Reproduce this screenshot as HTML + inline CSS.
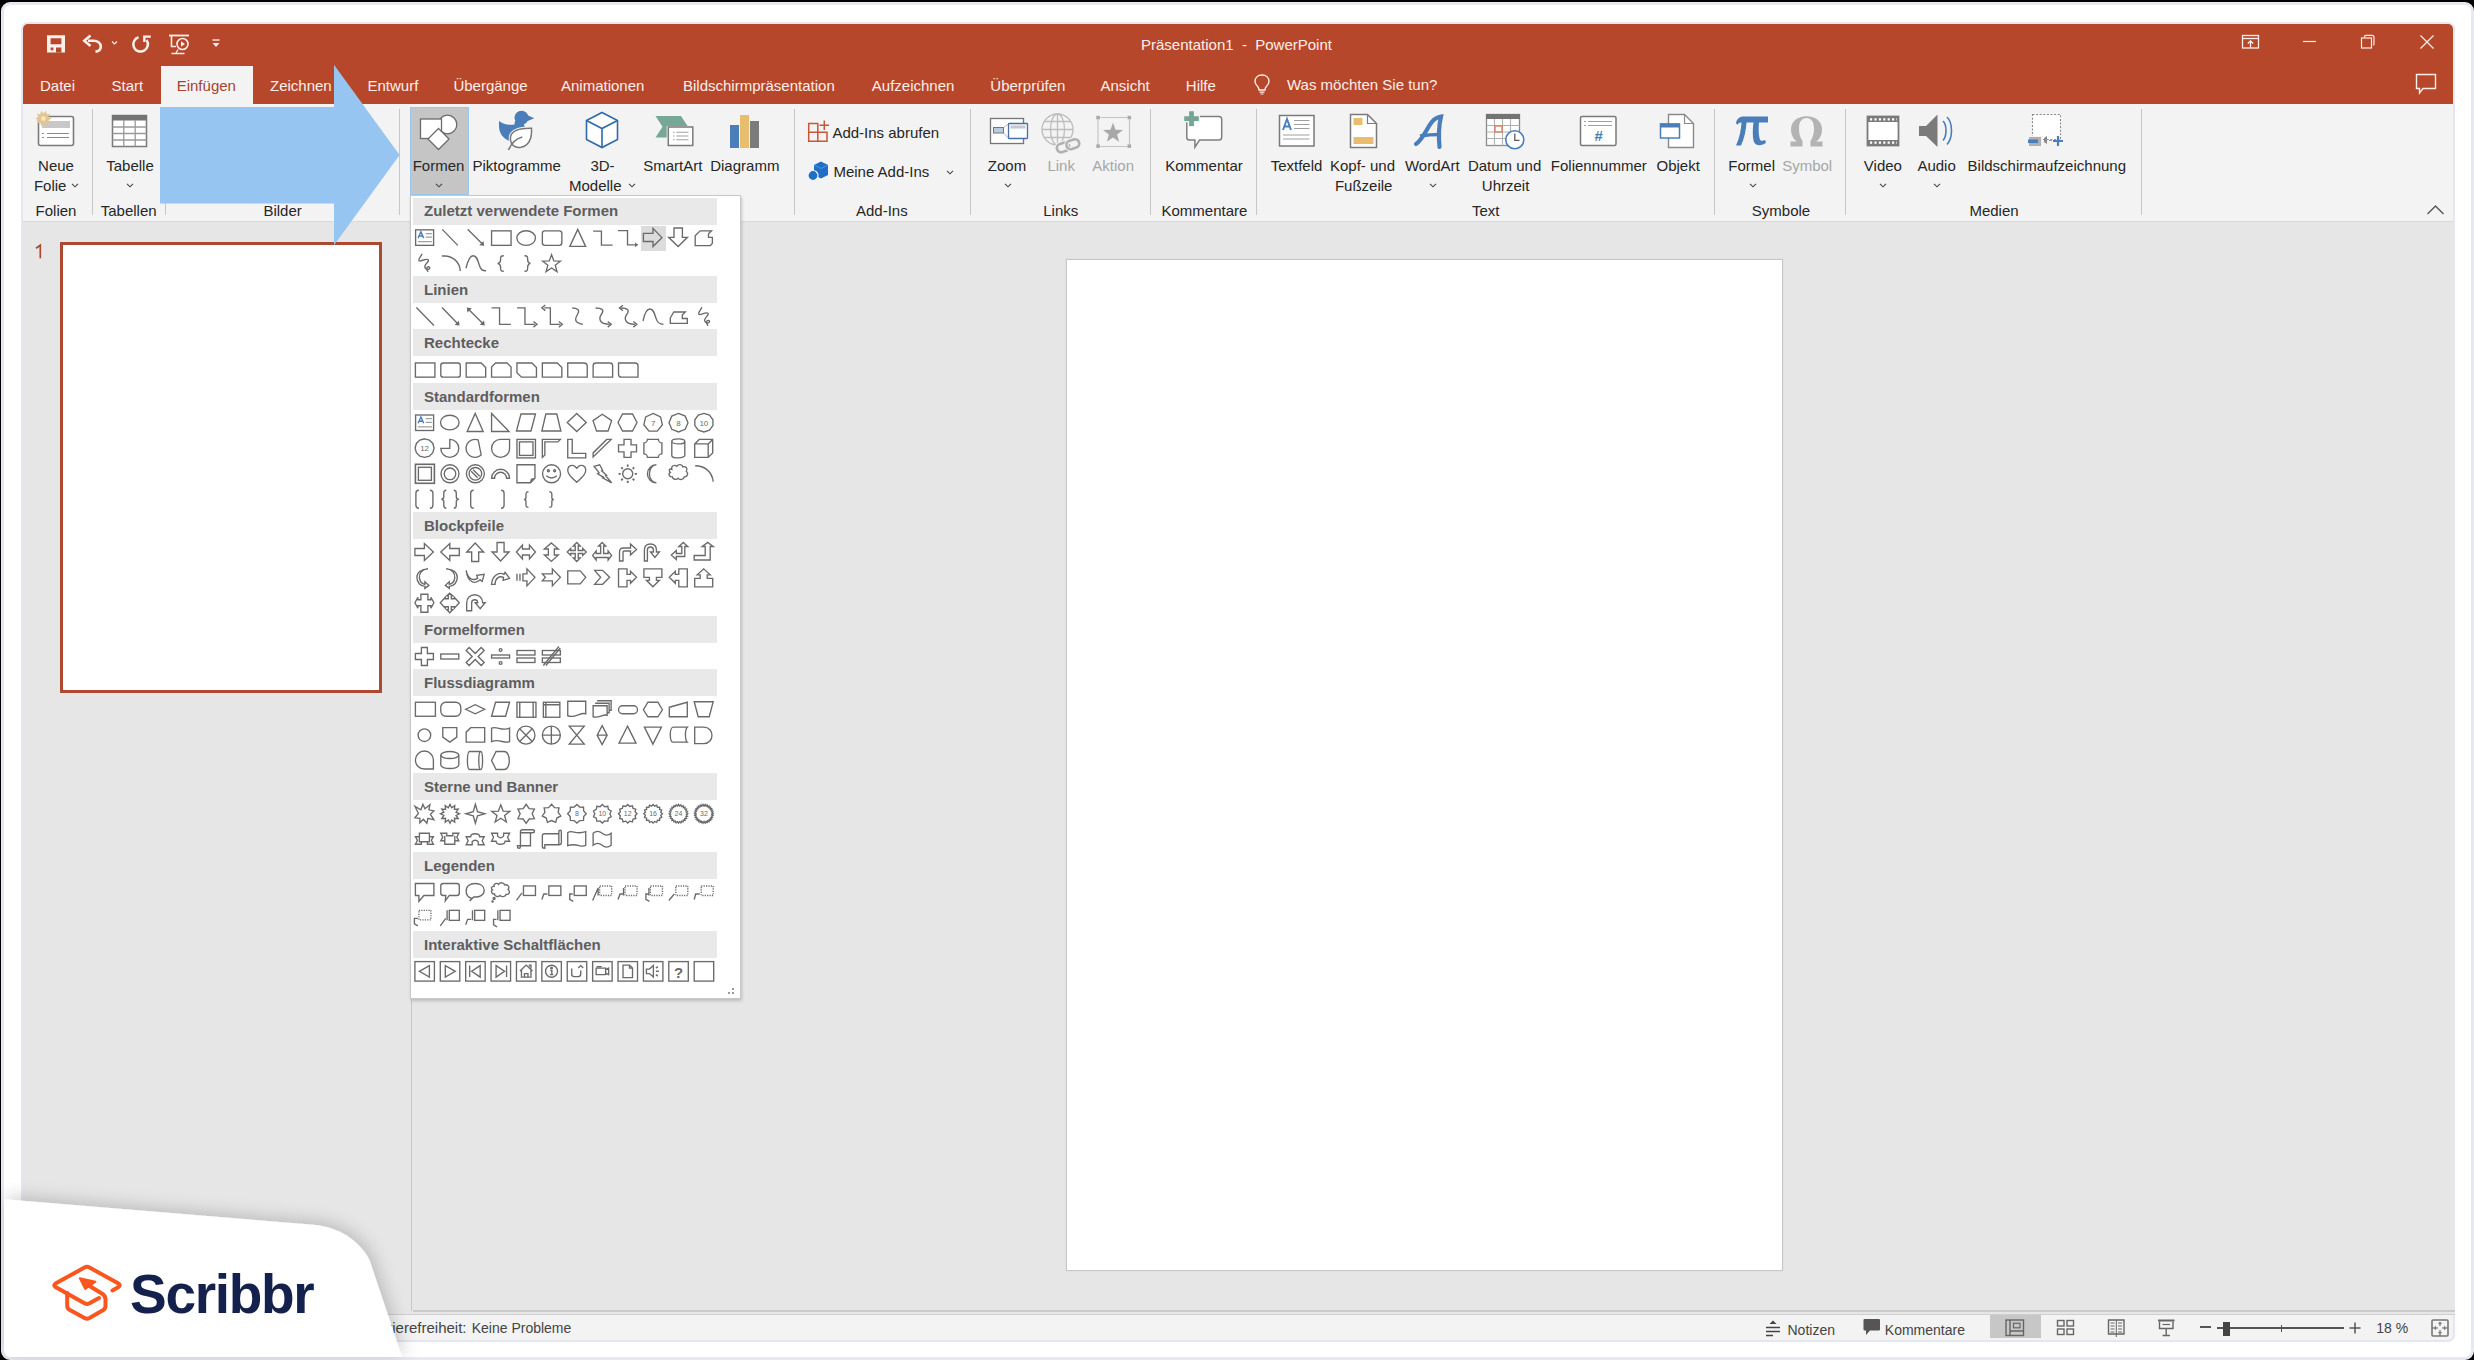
<!DOCTYPE html>
<html><head><meta charset="utf-8">
<style>
*{box-sizing:border-box;margin:0;padding:0}
html,body{width:2474px;height:1360px;overflow:hidden;background:#000}
body{position:relative;font-family:"Liberation Sans",sans-serif;color:#262626}
.a{position:absolute}
.t{position:absolute;white-space:nowrap}
#frame{position:absolute;left:1px;top:2px;width:2473px;height:1358px;background:#fff;border:3px solid #e7e8f1;border-radius:9px}
#win{position:absolute;left:21px;top:22px;width:2434px;height:1320px;border:2px solid #e4e6f2;border-radius:7px;background:#e6e6e6;overflow:hidden}
svg{position:absolute;overflow:visible}
</style></head>
<body>
<div id="frame"></div>
<div id="win">
<div class="a" style="left:0;top:0;width:2430px;height:80px;background:#b7472a"></div>
<div class="a" style="left:0;top:80px;width:2430px;height:117px;background:#f3f3f3"></div>
<div class="a" style="left:0;top:197px;width:2430px;height:1px;background:#d9d9d9"></div>
<div class="a" style="left:0;top:1291px;width:2430px;height:25px;background:#f3f3f3"></div>
</div>

<svg style="left:0px;top:0px" width="300" height="60" viewBox="0 0 300 60"><path fill-rule="evenodd" d="M47 35.3 H65 V52.6 H47 Z M50.6 38.2 H61.4 V44.3 H50.6 Z M50.6 47.6 H53.4 V50.2 H50.6 Z M56 47.6 H61.4 V52.7 H56 Z" fill="#fbefea"/></svg>
<svg style="left:0px;top:0px" width="300" height="60" viewBox="0 0 300 60"><path d="M88 40.8 H93.5 C98 40.8 100.8 43.5 100.8 46.5 C100.8 49.5 98.5 51.3 95.5 51.6" fill="none" stroke="#fbefea" stroke-width="2.6"/><path d="M90.5 35.5 L84.3 40.8 L90.5 46" fill="none" stroke="#fbefea" stroke-width="2.6" stroke-linejoin="miter"/></svg>
<svg style="left:110.5px;top:39.5px" width="7.0" height="5.0" viewBox="0 0 7.0 5.0"><path d="M1 1.5 L3.5 4.0 L6.0 1.5" fill="none" stroke="#fbefea" stroke-width="1.1"/></svg>
<svg style="left:0px;top:0px" width="300" height="60" viewBox="0 0 300 60"><path d="M138.5 37.3 A7.3 7.3 0 1 0 146.5 40" fill="none" stroke="#fbefea" stroke-width="2.5"/><path d="M144.3 42 V36.6 H150.8" fill="none" stroke="#fbefea" stroke-width="2.4"/></svg>
<svg style="left:168px;top:34px" width="24" height="22" viewBox="0 0 24 22"><path d="M1 1.5 H21" stroke="#fbefea" stroke-width="1.8"/><path d="M3.5 2 V12.5 H8" fill="none" stroke="#fbefea" stroke-width="1.6"/><circle cx="14.5" cy="10" r="5.5" fill="none" stroke="#fbefea" stroke-width="1.6"/><path d="M13 7.2 L17 10 L13 12.8 Z" fill="#fbefea"/><path d="M3.5 19.5 H16.5" stroke="#fbefea" stroke-width="1.5"/><path d="M10 15.5 L8 19" stroke="#fbefea" stroke-width="1.3"/></svg>
<svg style="left:211px;top:38px" width="10" height="12" viewBox="0 0 10 12"><path d="M1.5 2 H8.5" stroke="#fbefea" stroke-width="1.4"/><path d="M1.5 5 H8.5 L5 9 Z" fill="#fbefea"/></svg>
<div class="t" style="left:1236.5px;top:37.3px;font-size:15px;line-height:15px;color:#fbefea;font-weight:normal;transform:translateX(-50%);">Präsentation1&nbsp; -&nbsp; PowerPoint</div>
<svg style="left:2241px;top:34px" width="20" height="16" viewBox="0 0 20 16"><rect x="1.5" y="1.5" width="16" height="12.5" fill="none" stroke="#fbefea" stroke-width="1.3"/><path d="M1.5 4.5 H17.5" stroke="#fbefea" stroke-width="1.3"/><path d="M9.5 13.5 V7 M6.8 9.5 L9.5 6.8 L12.2 9.5" fill="none" stroke="#fbefea" stroke-width="1.3"/></svg>
<svg style="left:2302px;top:40px" width="15" height="3" viewBox="0 0 15 3"><path d="M1 1.5 H14" stroke="#fbefea" stroke-width="1.2"/></svg>
<svg style="left:2360px;top:34px" width="16" height="16" viewBox="0 0 16 16"><rect x="1.5" y="4" width="10" height="10" fill="none" stroke="#fbefea" stroke-width="1.2"/><path d="M4.5 3.5 V2.5 Q4.5 1.3 6 1.3 H12 Q14 1.3 14 3.3 V10 Q14 11 13 11" fill="none" stroke="#fbefea" stroke-width="1.2"/></svg>
<svg style="left:2419px;top:34px" width="16" height="16" viewBox="0 0 16 16"><path d="M1.5 1.5 L14.5 14.5 M14.5 1.5 L1.5 14.5" stroke="#fbefea" stroke-width="1.3"/></svg>
<svg style="left:2415px;top:73px" width="24" height="23" viewBox="0 0 24 23"><path d="M1.5 1.5 H20.5 V15.5 H8 L4.5 20 V15.5 H1.5 Z" fill="none" stroke="#fbefea" stroke-width="1.4"/></svg>
<div class="a" style="left:161px;top:66px;width:92px;height:38px;background:#f3f3f3"></div>
<div class="t" style="left:40.0px;top:77.8px;font-size:15px;line-height:15px;color:#fbefea;font-weight:normal;">Datei</div>
<div class="t" style="left:111.5px;top:77.8px;font-size:15px;line-height:15px;color:#fbefea;font-weight:normal;">Start</div>
<div class="t" style="left:270.0px;top:77.8px;font-size:15px;line-height:15px;color:#fbefea;font-weight:normal;">Zeichnen</div>
<div class="t" style="left:367.5px;top:77.8px;font-size:15px;line-height:15px;color:#fbefea;font-weight:normal;">Entwurf</div>
<div class="t" style="left:453.4px;top:77.8px;font-size:15px;line-height:15px;color:#fbefea;font-weight:normal;">Übergänge</div>
<div class="t" style="left:561.0px;top:77.8px;font-size:15px;line-height:15px;color:#fbefea;font-weight:normal;">Animationen</div>
<div class="t" style="left:683.0px;top:77.8px;font-size:15px;line-height:15px;color:#fbefea;font-weight:normal;">Bildschirmpräsentation</div>
<div class="t" style="left:871.8px;top:77.8px;font-size:15px;line-height:15px;color:#fbefea;font-weight:normal;">Aufzeichnen</div>
<div class="t" style="left:990.3px;top:77.8px;font-size:15px;line-height:15px;color:#fbefea;font-weight:normal;">Überprüfen</div>
<div class="t" style="left:1100.5px;top:77.8px;font-size:15px;line-height:15px;color:#fbefea;font-weight:normal;">Ansicht</div>
<div class="t" style="left:1185.8px;top:77.8px;font-size:15px;line-height:15px;color:#fbefea;font-weight:normal;">Hilfe</div>
<div class="t" style="left:176.7px;top:77.8px;font-size:15px;line-height:15px;color:#a5432b;font-weight:normal;">Einfügen</div>
<svg style="left:1253px;top:73px" width="18" height="22" viewBox="0 0 18 22"><path d="M9 2 C4.5 2 2 5 2 8.5 C2 11 3.5 12.5 5 14 C5.8 15 6 16 6 17 H12 C12 16 12.2 15 13 14 C14.5 12.5 16 11 16 8.5 C16 5 13.5 2 9 2 Z" fill="none" stroke="#fbefea" stroke-width="1.4"/><path d="M6.5 19.2 H11.5 M7.5 21 H10.5" stroke="#fbefea" stroke-width="1.2"/></svg>
<div class="t" style="left:1287.0px;top:76.5px;font-size:15px;line-height:15px;color:#fbefea;font-weight:normal;">Was möchten Sie tun?</div>
<div class="a" style="left:92px;top:109px;width:1px;height:106px;background:#c6c6c6"></div>
<div class="a" style="left:165px;top:109px;width:1px;height:106px;background:#c6c6c6"></div>
<div class="a" style="left:399px;top:109px;width:1px;height:106px;background:#c6c6c6"></div>
<div class="a" style="left:794px;top:109px;width:1px;height:106px;background:#c6c6c6"></div>
<div class="a" style="left:970px;top:109px;width:1px;height:106px;background:#c6c6c6"></div>
<div class="a" style="left:1150px;top:109px;width:1px;height:106px;background:#c6c6c6"></div>
<div class="a" style="left:1256px;top:109px;width:1px;height:106px;background:#c6c6c6"></div>
<div class="a" style="left:1714px;top:109px;width:1px;height:106px;background:#c6c6c6"></div>
<div class="a" style="left:1845px;top:109px;width:1px;height:106px;background:#c6c6c6"></div>
<div class="a" style="left:2141px;top:109px;width:1px;height:106px;background:#c6c6c6"></div>
<svg style="left:34px;top:110px" width="42" height="38" viewBox="0 0 42 38"><rect x="4.5" y="6.5" width="35" height="29" rx="2" fill="#fff" stroke="#7a7a7a" stroke-width="1.6"/>
<rect x="8" y="11" width="28" height="7" fill="#c8c8c8"/>
<path d="M8 23.5 H10 M13 23.5 H35 M8 27.5 H10 M13 27.5 H35" stroke="#8a8a8a" stroke-width="1.2"/>
<g transform="translate(9.5,8.5)" fill="#e3c690"><circle r="5.2"/><path d="M8.20 0.00 L4.20 2.00 L4.20 -2.00 Z M6.63 4.82 L2.22 4.09 L4.57 0.85 Z M2.53 7.80 L-0.60 4.61 L3.20 3.38 Z M-2.53 7.80 L-3.20 3.38 L0.60 4.61 Z M-6.63 4.82 L-4.57 0.85 L-2.22 4.09 Z M-8.20 0.00 L-4.20 -2.00 L-4.20 2.00 Z M-6.63 -4.82 L-2.22 -4.09 L-4.57 -0.85 Z M-2.53 -7.80 L0.60 -4.61 L-3.20 -3.38 Z M2.53 -7.80 L3.20 -3.38 L-0.60 -4.61 Z M6.63 -4.82 L4.57 -0.85 L2.22 -4.09 Z"/></g>
<circle cx="9.5" cy="8.5" r="2.2" fill="#f5e8cf"/></svg>
<div class="t" style="left:56.0px;top:158.0px;font-size:15px;line-height:15px;color:#262626;font-weight:normal;transform:translateX(-50%);">Neue</div>
<div class="t" style="left:33.9px;top:178.1px;font-size:15px;line-height:15px;color:#262626;font-weight:normal;">Folie</div>
<svg style="left:70.5px;top:182px" width="8" height="6" viewBox="0 0 8 6"><path d="M1 1.8 L4 4.8 L7 1.8" fill="none" stroke="#444" stroke-width="1.1"/></svg>
<div class="t" style="left:56.0px;top:202.5px;font-size:15px;line-height:15px;color:#262626;font-weight:normal;transform:translateX(-50%);">Folien</div>
<svg style="left:111px;top:114px" width="37" height="34" viewBox="0 0 37 34"><rect x="1.5" y="1.5" width="34" height="31" fill="#fff" stroke="#7a7a7a" stroke-width="1.5"/>
<rect x="1" y="1" width="35" height="5.5" fill="#737373"/>
<path d="M1.5 13 H35.5 M1.5 19.5 H35.5 M1.5 26 H35.5 M12.8 6 V32.5 M24.2 6 V32.5" stroke="#9a9a9a" stroke-width="1.3"/></svg>
<div class="t" style="left:130.0px;top:158.0px;font-size:15px;line-height:15px;color:#262626;font-weight:normal;transform:translateX(-50%);">Tabelle</div>
<svg style="left:125.69999999999999px;top:182px" width="8" height="6" viewBox="0 0 8 6"><path d="M1 1.8 L4 4.8 L7 1.8" fill="none" stroke="#444" stroke-width="1.1"/></svg>
<div class="t" style="left:128.7px;top:202.5px;font-size:15px;line-height:15px;color:#262626;font-weight:normal;transform:translateX(-50%);">Tabellen</div>
<div class="t" style="left:282.6px;top:202.5px;font-size:15px;line-height:15px;color:#262626;font-weight:normal;transform:translateX(-50%);">Bilder</div>
<div class="a" style="left:410px;top:107px;width:59px;height:88px;background:#c5c5c5;border:1px solid #98c8f0"></div>
<svg style="left:418px;top:112px" width="42" height="42" viewBox="0 0 42 42"><circle cx="29.5" cy="12.5" r="9.3" fill="#fff" stroke="#6b6b6b" stroke-width="1.3"/>
<rect x="2.5" y="7" width="21" height="19.5" fill="#fff" stroke="#6b6b6b" stroke-width="1.3"/>
<path d="M20.5 16.5 L31 27 L20.5 37.5 L10 27 Z" fill="#fff" stroke="#6b6b6b" stroke-width="1.3"/></svg>
<div class="t" style="left:438.5px;top:158.0px;font-size:15px;line-height:15px;color:#262626;font-weight:normal;transform:translateX(-50%);">Formen</div>
<svg style="left:435.4px;top:182.3px" width="8" height="6" viewBox="0 0 8 6"><path d="M1 1.8 L4 4.8 L7 1.8" fill="none" stroke="#444" stroke-width="1.1"/></svg>
<svg style="left:490px;top:105px" width="50" height="50" viewBox="0 0 50 50"><path d="M9 16 C13 19 18 20.5 24.5 19.5 L25 16 L33 16 L34.5 21.5 L35 24 L23 37 C13 35 9 28 9 21 Z" fill="#4a7ebb"/>
<circle cx="31.5" cy="12.8" r="7" fill="#4a7ebb"/><path d="M37 10 L44.3 13.2 L36.5 16.5 Z" fill="#4a7ebb"/>
<path d="M20.5 31.5 C22 25.5 30 23 41.5 23.2 C42 31 40 40 31 42.3 C25 43.5 21 40 20.5 35 Z" fill="#fff" stroke="#f3f3f3" stroke-width="3.5"/>
<path d="M20.5 31.5 C22 25.5 30 23 41.5 23.2 C42 31 40 40 31 42.3 C25 43.5 21 40 20.5 35 Z" fill="#fff" stroke="#787878" stroke-width="1.5"/>
<path d="M18.5 45 C22 37 26 33.5 32.3 32" fill="none" stroke="#787878" stroke-width="1.6"/></svg>
<div class="t" style="left:516.7px;top:158.0px;font-size:15px;line-height:15px;color:#262626;font-weight:normal;transform:translateX(-50%);">Piktogramme</div>
<svg style="left:584px;top:110px" width="36" height="40" viewBox="0 0 36 40"><path d="M18 2.5 L33.5 10.5 V29.5 L18 37.5 L2.5 29.5 V10.5 Z" fill="#fff" stroke="#2e6aa8" stroke-width="1.6"/>
<path d="M2.5 10.5 L18 18.5 L33.5 10.5 M18 18.5 V37.5" fill="none" stroke="#2e6aa8" stroke-width="1.6"/></svg>
<div class="t" style="left:602.5px;top:158.0px;font-size:15px;line-height:15px;color:#262626;font-weight:normal;transform:translateX(-50%);">3D-</div>
<div class="t" style="left:569.0px;top:178.1px;font-size:15px;line-height:15px;color:#262626;font-weight:normal;">Modelle</div>
<svg style="left:628.4px;top:182.3px" width="8" height="6" viewBox="0 0 8 6"><path d="M1 1.8 L4 4.8 L7 1.8" fill="none" stroke="#444" stroke-width="1.1"/></svg>
<svg style="left:654px;top:114px" width="40" height="34" viewBox="0 0 40 34"><path d="M1.5 2 H27 L34 12.8 L27 23.6 H1.5 L8.5 12.8 Z" fill="#76a797"/>
<rect x="12.7" y="12" width="28" height="21" fill="#f3f3f3"/>
<rect x="14.3" y="13" width="24.5" height="18.5" fill="#fff" stroke="#7a7a7a" stroke-width="1.5"/>
<path d="M19 18.2 H20.5 M22.5 18.2 H34.5 M19 22 H20.5 M22.5 22 H34.5 M19 25.8 H20.5 M22.5 25.8 H34.5" stroke="#a0a0a0" stroke-width="1.1"/></svg>
<div class="t" style="left:672.8px;top:158.0px;font-size:15px;line-height:15px;color:#262626;font-weight:normal;transform:translateX(-50%);">SmartArt</div>
<div class="a" style="left:730px;top:125px;width:9px;height:23px;background:#4a7ebb"></div>
<div class="a" style="left:740px;top:115px;width:9px;height:33px;background:#e8bd6e"></div>
<div class="a" style="left:750px;top:121px;width:9px;height:27px;background:#7b7b7b"></div>
<div class="t" style="left:744.8px;top:158.0px;font-size:15px;line-height:15px;color:#262626;font-weight:normal;transform:translateX(-50%);">Diagramm</div>
<svg style="left:0px;top:0px" width="1000" height="200" viewBox="0 0 1000 200"><path d="M808.7 123.5 H817.8 V132.2 H808.7 Z M808.7 132.2 H817.8 V141.2 H808.7 Z M817.8 132.2 H827 V141.2 H817.8 Z" fill="none" stroke="#c8563b" stroke-width="1.5"/>
<path d="M824.3 120.5 V130 M819.5 125.2 H829" stroke="#c8563b" stroke-width="1.5"/></svg>
<div class="t" style="left:832.4px;top:125.1px;font-size:15px;line-height:15px;color:#262626;font-weight:normal;">Add-Ins abrufen</div>
<svg style="left:807px;top:160px" width="23" height="22" viewBox="0 0 23 22"><path d="M7 5 L14 1.5 L21 5 V15 L14 18.5 L7 15 Z" fill="#1e6fc5"/><path d="M7 5 L14 8.5 L21 5" fill="none" stroke="#5b9ae0" stroke-width="0.8"/><circle cx="6" cy="15.5" r="5" fill="#1e6fc5" stroke="#f3f3f3" stroke-width="1.2"/></svg>
<div class="t" style="left:833.4px;top:164.3px;font-size:15px;line-height:15px;color:#262626;font-weight:normal;">Meine Add-Ins</div>
<svg style="left:945.5px;top:168.5px" width="8" height="6" viewBox="0 0 8 6"><path d="M1 1.8 L4 4.8 L7 1.8" fill="none" stroke="#444" stroke-width="1.1"/></svg>
<div class="t" style="left:881.8px;top:202.5px;font-size:15px;line-height:15px;color:#262626;font-weight:normal;transform:translateX(-50%);">Add-Ins</div>
<svg style="left:0px;top:0px" width="1200" height="200" viewBox="0 0 1200 200"><rect x="990.5" y="118.5" width="33" height="25" fill="#fff" stroke="#767676" stroke-width="1.3"/>
<path d="M1003.5 127.5 L1008.5 123.8 M1003.5 133 L1008.5 138.2" stroke="#9bb5d3" stroke-width="0.9"/>
<rect x="993.5" y="127.5" width="10" height="5.5" fill="#b9cde2" stroke="#767676" stroke-width="1"/>
<rect x="1008.5" y="123.5" width="19" height="15" rx="0.8" fill="#fafdff" stroke="#4a6fa5" stroke-width="1.3"/>
<rect x="1010.5" y="125.5" width="15" height="3" fill="#c8c8c8"/></svg>
<div class="t" style="left:1007.0px;top:158.0px;font-size:15px;line-height:15px;color:#262626;font-weight:normal;transform:translateX(-50%);">Zoom</div>
<svg style="left:1003.5px;top:182.3px" width="8" height="6" viewBox="0 0 8 6"><path d="M1 1.8 L4 4.8 L7 1.8" fill="none" stroke="#444" stroke-width="1.1"/></svg>
<svg style="left:1040px;top:112px" width="44" height="42" viewBox="0 0 44 42"><circle cx="17.5" cy="17.5" r="15.5" fill="none" stroke="#bdbdbd" stroke-width="1.3"/>
<ellipse cx="17.5" cy="17.5" rx="7" ry="15.5" fill="none" stroke="#bdbdbd" stroke-width="1.3"/>
<path d="M2 17.5 H33 M4.5 9.5 H30.5 M4.5 25.5 H30.5 M17.5 2 V33" stroke="#bdbdbd" stroke-width="1.3"/>
<g transform="rotate(-18 28 33.5)"><rect x="16.5" y="29.5" width="12.5" height="8.5" rx="4.2" fill="none" stroke="#f3f3f3" stroke-width="4.5"/><rect x="16.5" y="29.5" width="12.5" height="8.5" rx="4.2" fill="none" stroke="#b0b0b0" stroke-width="2.6"/>
<rect x="26.5" y="29.5" width="13" height="8.5" rx="4.2" fill="none" stroke="#f3f3f3" stroke-width="4.5"/><rect x="26.5" y="29.5" width="13" height="8.5" rx="4.2" fill="none" stroke="#b0b0b0" stroke-width="2.6"/></g></svg>
<div class="t" style="left:1061.2px;top:158.0px;font-size:15px;line-height:15px;color:#a6a6a6;font-weight:normal;transform:translateX(-50%);">Link</div>
<svg style="left:0px;top:0px" width="1200" height="200" viewBox="0 0 1200 200"><path d="M1100.5 117.5 H1127 M1100.5 146.5 H1127 M1098 120 V144 M1129.5 120 V144" stroke="#c2c2c2" stroke-width="1.1"/>
<rect x="1096.3" y="115.8" width="3.6" height="3.6" fill="#a9a9a9"/><rect x="1127.5" y="115.8" width="3.6" height="3.6" fill="#a9a9a9"/><rect x="1096.3" y="144.3" width="3.6" height="3.6" fill="#a9a9a9"/><rect x="1127.5" y="144.3" width="3.6" height="3.6" fill="#a9a9a9"/>
<path d="M1113.00 122.70 L1115.53 129.72 L1122.99 129.96 L1117.09 134.53 L1119.17 141.69 L1113.00 137.50 L1106.83 141.69 L1108.91 134.53 L1103.01 129.96 L1110.47 129.72 Z" fill="#a8a8a8"/></svg>
<div class="t" style="left:1113.2px;top:158.0px;font-size:15px;line-height:15px;color:#a6a6a6;font-weight:normal;transform:translateX(-50%);">Aktion</div>
<div class="t" style="left:1060.8px;top:202.5px;font-size:15px;line-height:15px;color:#262626;font-weight:normal;transform:translateX(-50%);">Links</div>
<svg style="left:1182px;top:109px" width="44" height="42" viewBox="0 0 44 42"><path d="M7.5 7.6 H37 Q39.7 7.6 39.7 10.5 V28.3 Q39.7 31.1 37 31.1 H17.5 L12.9 38.2 V31.1 H7.5 Q4.8 31.1 4.8 28.3 V10.5 Q4.8 7.6 7.5 7.6 Z" fill="#fff" stroke="#7f7f7f" stroke-width="1.5"/>
<path d="M9.5 1.2 V18 M1.1 9.6 H17.9" stroke="#f3f3f3" stroke-width="7.2"/>
<path d="M9.5 2.3 V16.9 M2.2 9.6 H16.8" stroke="#76a596" stroke-width="4.8"/></svg>
<div class="t" style="left:1204.0px;top:158.0px;font-size:15px;line-height:15px;color:#262626;font-weight:normal;transform:translateX(-50%);">Kommentar</div>
<div class="t" style="left:1204.4px;top:202.5px;font-size:15px;line-height:15px;color:#262626;font-weight:normal;transform:translateX(-50%);">Kommentare</div>
<svg style="left:1278px;top:114px" width="39" height="34" viewBox="0 0 39 34"><rect x="1.5" y="1.5" width="34.5" height="30.5" fill="#fff" stroke="#7a7a7a" stroke-width="1.5"/>
<path d="M5 16 L9 5 L13 16 M6.3 12.5 H11.7" fill="none" stroke="#4a7ebb" stroke-width="1.9"/>
<path d="M16 6.5 H31.5 M16 10.5 H31.5 M16 14.5 H31.5 M5 21 H31.5 M5 25 H31.5" stroke="#a0a0a0" stroke-width="1.2"/></svg>
<div class="t" style="left:1296.5px;top:158.0px;font-size:15px;line-height:15px;color:#262626;font-weight:normal;transform:translateX(-50%);">Textfeld</div>
<svg style="left:1349px;top:113px" width="30" height="37" viewBox="0 0 30 37"><path d="M1.5 1.5 H18.5 L27.5 10.5 V34.5 H1.5 Z" fill="#fff" stroke="#7a7a7a" stroke-width="1.5"/>
<path d="M18.5 1.5 V10.5 H27.5" fill="none" stroke="#7a7a7a" stroke-width="1.2"/>
<rect x="4.5" y="5" width="9" height="7" fill="#e8bd6e"/><rect x="4.5" y="24" width="20" height="7" fill="#e8bd6e"/></svg>
<div class="t" style="left:1362.5px;top:158.0px;font-size:15px;line-height:15px;color:#262626;font-weight:normal;transform:translateX(-50%);">Kopf- und</div>
<div class="t" style="left:1363.7px;top:178.1px;font-size:15px;line-height:15px;color:#262626;font-weight:normal;transform:translateX(-50%);">Fußzeile</div>
<svg style="left:1414px;top:114px" width="32" height="36" viewBox="0 0 32 36"><path d="M2 30 C7 27 11 19 15 12 C18 7 22 3 27 2.5 C25 11 24.5 22 25.5 33" fill="none" stroke="#4a7ebb" stroke-width="4.2" stroke-linecap="round"/>
<path d="M6 22 C12 21 19 20.5 26 20.5" fill="none" stroke="#4a7ebb" stroke-width="3.5"/></svg>
<div class="t" style="left:1432.3px;top:158.0px;font-size:15px;line-height:15px;color:#262626;font-weight:normal;transform:translateX(-50%);">WordArt</div>
<svg style="left:1429px;top:182.3px" width="8" height="6" viewBox="0 0 8 6"><path d="M1 1.8 L4 4.8 L7 1.8" fill="none" stroke="#444" stroke-width="1.1"/></svg>
<svg style="left:1485px;top:113px" width="42" height="38" viewBox="0 0 42 38"><rect x="1.5" y="1.5" width="33" height="31" fill="#fff" stroke="#8a8a8a" stroke-width="1.3"/>
<rect x="1" y="1" width="34" height="5" fill="#737373"/>
<path d="M1.5 12.5 H34.5 M1.5 19 H34.5 M1.5 25.5 H34.5 M9.5 6 V32.5 M17.5 6 V32.5 M25.5 6 V32.5" stroke="#b0b0b0" stroke-width="1.1"/>
<rect x="10" y="13" width="7" height="6" fill="none" stroke="#e07a56" stroke-width="1.3"/>
<circle cx="29.8" cy="26.8" r="9" fill="#fff" stroke="#4a7ebb" stroke-width="1.6"/>
<path d="M29.8 20.5 V27.3 H34.5" fill="none" stroke="#5a5a5a" stroke-width="1.3"/></svg>
<div class="t" style="left:1504.6px;top:158.0px;font-size:15px;line-height:15px;color:#262626;font-weight:normal;transform:translateX(-50%);">Datum und</div>
<div class="t" style="left:1505.6px;top:178.1px;font-size:15px;line-height:15px;color:#262626;font-weight:normal;transform:translateX(-50%);">Uhrzeit</div>
<svg style="left:1579px;top:115px" width="40" height="33" viewBox="0 0 40 33"><rect x="1.5" y="1.5" width="35.5" height="29" rx="1.5" fill="#fff" stroke="#7a7a7a" stroke-width="1.5"/>
<path d="M5 6.5 H7 M9 6.5 H33 M5 10.5 H7 M9 10.5 H33" stroke="#a0a0a0" stroke-width="1.1"/>
<text x="19.3" y="26" font-family="Liberation Sans" font-size="15" font-weight="bold" fill="#4a7ebb" text-anchor="middle" font-style="italic">#</text></svg>
<div class="t" style="left:1598.8px;top:158.0px;font-size:15px;line-height:15px;color:#262626;font-weight:normal;transform:translateX(-50%);">Foliennummer</div>
<svg style="left:1659px;top:113px" width="38" height="37" viewBox="0 0 38 37"><path d="M9.5 1.5 H25.5 L34.5 10.5 V34.5 H9.5 Z" fill="#fff" stroke="#8a8a8a" stroke-width="1.4"/>
<path d="M25.5 1.5 V10.5 H34.5" fill="none" stroke="#8a8a8a" stroke-width="1.2"/>
<rect x="1.5" y="11" width="19" height="14" fill="#fff" stroke="#4a7ebb" stroke-width="1.5"/><rect x="1" y="10.5" width="20" height="4" fill="#4a7ebb"/></svg>
<div class="t" style="left:1678.2px;top:158.0px;font-size:15px;line-height:15px;color:#262626;font-weight:normal;transform:translateX(-50%);">Objekt</div>
<div class="t" style="left:1485.7px;top:202.5px;font-size:15px;line-height:15px;color:#262626;font-weight:normal;transform:translateX(-50%);">Text</div>
<svg style="left:1734px;top:114px" width="36" height="34" viewBox="0 0 36 34"><path d="M2 9 C3 4 6 2.5 10 2.5 H34 V8.5 H25 C24.5 14 24.5 20 25.5 24 C26 27 28 27.5 31 26 L32 28.5 C28.5 32 22 32.5 20 28 C18.5 24 18.5 15 19.5 8.5 H12.5 C12 16 10.5 24 7 31.5 H2 C5.5 24 7 16 7.5 8.5 C5 8.5 4 9.5 3.5 11 Z" fill="#4a7ebb"/></svg>
<svg style="left:1790px;top:116px" width="33" height="31" viewBox="0 0 33 31"><path fill-rule="evenodd" d="M12.5 30.5 H0.5 V25.5 H7 C3 23 1 18.5 1 13.5 C1 5.5 7.5 0.3 16.5 0.3 C25.5 0.3 32 5.5 32 13.5 C32 18.5 30 23 26 25.5 H32.5 V30.5 H20.5 V25 C22.8 22 24 17.5 24 12.5 C24 5.5 21 2 16.5 2 C12 2 9 5.5 9 12.5 C9 17.5 10.2 22 12.5 25 Z" fill="#b3b3b3"/></svg>
<div class="t" style="left:1751.7px;top:158.0px;font-size:15px;line-height:15px;color:#262626;font-weight:normal;transform:translateX(-50%);">Formel</div>
<svg style="left:1748.5px;top:182.3px" width="8" height="6" viewBox="0 0 8 6"><path d="M1 1.8 L4 4.8 L7 1.8" fill="none" stroke="#444" stroke-width="1.1"/></svg>
<div class="t" style="left:1807.2px;top:158.0px;font-size:15px;line-height:15px;color:#a6a6a6;font-weight:normal;transform:translateX(-50%);">Symbol</div>
<div class="t" style="left:1781.0px;top:202.5px;font-size:15px;line-height:15px;color:#262626;font-weight:normal;transform:translateX(-50%);">Symbole</div>
<svg style="left:1866px;top:115px" width="35" height="32" viewBox="0 0 35 32"><rect x="1.5" y="1.5" width="31" height="29" fill="#fff" stroke="#7a7a7a" stroke-width="1.8"/>
<rect x="1.5" y="1.5" width="31" height="5.5" fill="#7a7a7a"/><rect x="1.5" y="25" width="31" height="5.5" fill="#7a7a7a"/>
<path d="M4 4.3 H31 M4 27.7 H31" stroke="#fff" stroke-width="2.2" stroke-dasharray="2.2 2.2"/></svg>
<div class="t" style="left:1882.9px;top:158.0px;font-size:15px;line-height:15px;color:#262626;font-weight:normal;transform:translateX(-50%);">Video</div>
<svg style="left:1879px;top:182.3px" width="8" height="6" viewBox="0 0 8 6"><path d="M1 1.8 L4 4.8 L7 1.8" fill="none" stroke="#444" stroke-width="1.1"/></svg>
<svg style="left:1918px;top:113px" width="38" height="36" viewBox="0 0 38 36"><path d="M1 13 H8 L19.5 1.5 V34 L8 23 H1 Z" fill="#7a7a7a"/>
<path d="M25 8 C29 12 29 23 25 27.5 M29 4 C35 10 35 25 29 31.5" fill="none" stroke="#4a7ebb" stroke-width="1.6"/></svg>
<div class="t" style="left:1936.6px;top:158.0px;font-size:15px;line-height:15px;color:#262626;font-weight:normal;transform:translateX(-50%);">Audio</div>
<svg style="left:1932.5px;top:182.3px" width="8" height="6" viewBox="0 0 8 6"><path d="M1 1.8 L4 4.8 L7 1.8" fill="none" stroke="#444" stroke-width="1.1"/></svg>
<svg style="left:2027px;top:112px" width="40" height="38" viewBox="0 0 40 38"><rect x="5.5" y="2.5" width="28" height="25" fill="#fff" stroke="#8a8a8a" stroke-width="1.1" stroke-dasharray="2 1.6"/>
<rect x="1" y="24" width="15" height="12" fill="#f3f3f3"/>
<rect x="2" y="25" width="12" height="9" fill="#b0b0b0"/><rect x="1" y="27.5" width="10" height="3.5" fill="#4a7ebb"/>
<path d="M17 26 L20 24 V32 L17 30 Z" fill="#8a8a8a"/><path d="M22 28.5 H25" stroke="#a0a0a0" stroke-width="1"/>
<path d="M31 24 V34 M26 29 H36" stroke="#4a7ebb" stroke-width="2.2"/></svg>
<div class="t" style="left:2046.8px;top:158.0px;font-size:15px;line-height:15px;color:#262626;font-weight:normal;transform:translateX(-50%);">Bildschirmaufzeichnung</div>
<div class="t" style="left:1994.0px;top:202.5px;font-size:15px;line-height:15px;color:#262626;font-weight:normal;transform:translateX(-50%);">Medien</div>
<svg style="left:2426px;top:204px" width="20" height="12" viewBox="0 0 20 12"><path d="M1.5 10 L9.5 2 L17.5 10" fill="none" stroke="#555" stroke-width="1.4"/></svg>
<svg style="left:0px;top:0px" width="100" height="300" viewBox="0 0 100 300"><path d="M40.3 258.3 V245.2 L36 248.3" fill="none" stroke="#a84a32" stroke-width="1.7"/></svg>
<div class="a" style="left:60px;top:242px;width:322px;height:451px;background:#fff;border:3px solid #ab4a30"></div>
<div class="a" style="left:411px;top:220px;width:1px;height:1091px;background:#c8c8c8"></div>
<div class="a" style="left:1066px;top:259px;width:717px;height:1012px;background:#fff;border:1px solid #c6c6c6;box-shadow:0 0 2px rgba(0,0,0,0.06)"></div>
<div class="a" style="left:413px;top:1310px;width:2042px;height:2px;background:#cacaca"></div>
<div class="a" style="left:23px;top:1314px;width:2432px;height:1px;background:#cfcfcf"></div>
<div class="t" style="left:466.5px;top:1320.3px;font-size:15px;line-height:15px;color:#444;font-weight:normal;transform:translateX(-100%);">Barrierefreiheit:</div>
<div class="t" style="left:471.7px;top:1321.1px;font-size:14px;line-height:14px;color:#444;font-weight:normal;">Keine Probleme</div>
<svg style="left:1765px;top:1318px" width="17" height="20" viewBox="0 0 17 20"><path d="M4.5 6 L8 2.5 L11.5 6 Z" fill="#444"/><path d="M1 9.5 H15 M1 13.5 H15 M1 17.5 H8" stroke="#444" stroke-width="1.5"/></svg>
<div class="t" style="left:1787.5px;top:1323.1px;font-size:14px;line-height:14px;color:#444;font-weight:normal;">Notizen</div>
<svg style="left:1862px;top:1318px" width="20" height="20" viewBox="0 0 20 20"><path d="M1.5 2 Q1.5 1 2.5 1 H17 Q18 1 18 2 V11.5 Q18 12.5 17 12.5 H8 L4 17 V12.5 H2.5 Q1.5 12.5 1.5 11.5 Z" fill="#555"/></svg>
<div class="t" style="left:1884.8px;top:1323.1px;font-size:14px;line-height:14px;color:#444;font-weight:normal;">Kommentare</div>
<div class="a" style="left:1990px;top:1315px;width:51px;height:23px;background:#c7c7c7"></div>
<svg style="left:2005px;top:1319px" width="20" height="18" viewBox="0 0 20 18"><rect x="1" y="1" width="17.5" height="15.5" fill="none" stroke="#666" stroke-width="1.4"/><path d="M5 1 V16.5 M5 12 H18.5" stroke="#666" stroke-width="1.4"/><rect x="8.5" y="4.3" width="6.5" height="4.5" fill="none" stroke="#666" stroke-width="1.2"/></svg>
<svg style="left:2056px;top:1319px" width="20" height="18" viewBox="0 0 20 18"><rect x="1.5" y="1.5" width="6.5" height="5.5" fill="none" stroke="#666" stroke-width="1.4"/><rect x="11" y="1.5" width="6.5" height="5.5" fill="none" stroke="#666" stroke-width="1.4"/><rect x="1.5" y="10" width="6.5" height="5.5" fill="none" stroke="#666" stroke-width="1.4"/><rect x="11" y="10" width="6.5" height="5.5" fill="none" stroke="#666" stroke-width="1.4"/></svg>
<svg style="left:2107px;top:1318px" width="19" height="20" viewBox="0 0 19 20"><path d="M1.5 2 H17 V16 H1.5 Z" fill="none" stroke="#666" stroke-width="1.4"/><path d="M9.3 2 V19 M3.5 5 H7.5 M3.5 8 H7.5 M3.5 11 H7.5 M3.5 14 H7.5 M11 5 H15 M11 8 H15 M11 11 H15 M11 14 H15" stroke="#666" stroke-width="1"/></svg>
<svg style="left:2157px;top:1319px" width="19" height="18" viewBox="0 0 19 18"><path d="M1 1.5 H17.5" stroke="#666" stroke-width="2"/><path d="M2.5 2.5 V9.5 H16 V2.5" fill="none" stroke="#666" stroke-width="1.4"/><path d="M5.5 5.5 H13" stroke="#666" stroke-width="1.2"/><path d="M9.2 9.5 V16 M5.5 16.5 H13" stroke="#666" stroke-width="1.4"/></svg>
<div class="a" style="left:2200px;top:1326px;width:11px;height:2px;background:#555"></div>
<div class="a" style="left:2217px;top:1327px;width:127px;height:2px;background:#555"></div>
<div class="a" style="left:2223px;top:1322px;width:7px;height:14px;background:#444"></div>
<div class="a" style="left:2281px;top:1325px;width:1px;height:7px;background:#555"></div>
<svg style="left:2349px;top:1322px" width="12" height="12" viewBox="0 0 12 12"><path d="M0.5 6 H11.5 M6 0.5 V11.5" stroke="#555" stroke-width="1.5"/></svg>
<div class="t" style="left:2392.2px;top:1320.8px;font-size:14px;line-height:14px;color:#444;font-weight:normal;transform:translateX(-50%);">18 %</div>
<svg style="left:2431px;top:1319px" width="18" height="18" viewBox="0 0 18 18"><rect x="1" y="1" width="16" height="16" rx="1" fill="none" stroke="#777" stroke-width="1.6"/><path d="M9 3 V7 M7.3 4.3 H10.7 M9 11 V17 M7.3 13.7 H10.7 M1 9 H7 M4.3 7.3 V10.7 M11 9 H17 M13.7 7.3 V10.7" stroke="#666" stroke-width="1.1"/></svg>
<svg style="left:0px;top:0px" width="2474" height="1360" viewBox="0 0 2474 1360"><path d="M160 107 H334 V64.7 L399.6 155 L334 245.3 V203.5 H160 Z" fill="#95c5f0"/></svg>
<div class="a" style="left:410px;top:195px;width:331px;height:804px;background:#fff;border:1px solid #c8c8c8;box-shadow:1px 2px 3px rgba(0,0,0,0.18)"></div>
<div class="a" style="left:413px;top:197.5px;width:304px;height:27px;background:#e9e9e9"></div>
<div class="t" style="left:424.0px;top:203.4px;font-size:15px;line-height:15px;color:#5e5e5e;font-weight:bold;">Zuletzt verwendete Formen</div>
<div class="a" style="left:413px;top:276.1px;width:304px;height:27px;background:#e9e9e9"></div>
<div class="t" style="left:424.0px;top:282.1px;font-size:15px;line-height:15px;color:#5e5e5e;font-weight:bold;">Linien</div>
<div class="a" style="left:413px;top:329.4px;width:304px;height:27px;background:#e9e9e9"></div>
<div class="t" style="left:424.0px;top:335.3px;font-size:15px;line-height:15px;color:#5e5e5e;font-weight:bold;">Rechtecke</div>
<div class="a" style="left:413px;top:382.6px;width:304px;height:27px;background:#e9e9e9"></div>
<div class="t" style="left:424.0px;top:388.6px;font-size:15px;line-height:15px;color:#5e5e5e;font-weight:bold;">Standardformen</div>
<div class="a" style="left:413px;top:512.1px;width:304px;height:27px;background:#e9e9e9"></div>
<div class="t" style="left:424.0px;top:518.0px;font-size:15px;line-height:15px;color:#5e5e5e;font-weight:bold;">Blockpfeile</div>
<div class="a" style="left:413px;top:616.1px;width:304px;height:27px;background:#e9e9e9"></div>
<div class="t" style="left:424.0px;top:622.1px;font-size:15px;line-height:15px;color:#5e5e5e;font-weight:bold;">Formelformen</div>
<div class="a" style="left:413px;top:669.4px;width:304px;height:27px;background:#e9e9e9"></div>
<div class="t" style="left:424.0px;top:675.3px;font-size:15px;line-height:15px;color:#5e5e5e;font-weight:bold;">Flussdiagramm</div>
<div class="a" style="left:413px;top:773.4px;width:304px;height:27px;background:#e9e9e9"></div>
<div class="t" style="left:424.0px;top:779.4px;font-size:15px;line-height:15px;color:#5e5e5e;font-weight:bold;">Sterne und Banner</div>
<div class="a" style="left:413px;top:852.1px;width:304px;height:27px;background:#e9e9e9"></div>
<div class="t" style="left:424.0px;top:858.0px;font-size:15px;line-height:15px;color:#5e5e5e;font-weight:bold;">Legenden</div>
<div class="a" style="left:413px;top:930.7px;width:304px;height:27px;background:#e9e9e9"></div>
<div class="t" style="left:424.0px;top:936.7px;font-size:15px;line-height:15px;color:#5e5e5e;font-weight:bold;">Interaktive Schaltflächen</div>
<div class="a" style="left:732px;top:988px;width:2px;height:2px;background:#9a9a9a"></div>
<div class="a" style="left:732px;top:992px;width:2px;height:2px;background:#9a9a9a"></div>
<div class="a" style="left:728px;top:992px;width:2px;height:2px;background:#9a9a9a"></div>
<div class="a" style="left:641px;top:225.5px;width:25px;height:25px;background:#dcdcdc"></div>
<svg style="left:0px;top:0px" width="2474" height="1360" viewBox="0 0 2474 1360"><g fill="none" stroke="#6a6a6a" stroke-width="1.35"><g transform="translate(411.90,225.35)"><rect x="3.7" y="4.5" width="18" height="15.5" /><path d="M6.2 12.8 L9 6.4 L11.8 12.8 M7.2 10.7 H10.8" stroke="#4a7ebb" stroke-width="1.4"/><path d="M13.8 8.2 H20 M13.8 11.8 H20 M6 16.3 H20" stroke="#a0a0a0" stroke-width="1.2"/></g><g transform="translate(437.29,225.35)"><path d="M5 4 L20.5 20" /></g><g transform="translate(462.68,225.35)"><path d="M5 4 L20 19" /><path d="M21.50 20.50 L16.55 19.79 L20.79 15.55 Z" fill="#6a6a6a" stroke="none"/></g><g transform="translate(488.07,225.35)"><rect x="3.5" y="5.5" width="19.5" height="14.5"/></g><g transform="translate(513.46,225.35)"><ellipse cx="12.7" cy="12.7" rx="9.3" ry="7.3"/></g><g transform="translate(538.85,225.35)"><rect x="3.5" y="5.5" width="19.5" height="14.5" rx="2.5"/></g><g transform="translate(564.24,225.35)"><path d="M5.6 21 L13.5 4 L21.4 21 Z" /></g><g transform="translate(589.63,225.35)"><path d="M3.5 5.7 H11.8 V19.8 H23" /></g><g transform="translate(615.02,225.35)"><path d="M3 5.2 H12.5 V19.5 H21" /><path d="M23.30 19.50 L20.10 21.90 L20.10 17.10 Z" fill="#6a6a6a" stroke="none"/></g><g transform="translate(640.41,225.35)"><path d="M3 8 H12.6 V3 L21.5 12.3 L12.6 21.2 V16.1 H3 Z" /></g><g transform="translate(665.80,225.35)"><path d="M8.2 2.6 H16.6 V12 H21.6 L12.4 21.1 L2.8 12 H8.2 Z" /></g><g transform="translate(691.19,225.35)"><path d="M4 10.5 L9 5.5 H20.3 L17.3 8.5 V12 H21.2 V18 L19.2 20.2 H4 Z" /></g><g transform="translate(411.90,250.75)"><path d="M10.2 2.9 C9 6 6 8 7.2 10 C8.5 11.5 14 7 16.3 9 C18 11 12 13.5 13 16.5 C13.5 19 17.5 19.5 17.8 17.3 C18 15.5 14.8 15.5 14.8 18 C14.8 19.5 15.8 20.5 16.3 21.2" /></g><g transform="translate(437.29,250.75)"><path d="M4.6 5.2 H7.5 C14 5.2 22.5 10 23 20.2" /></g><g transform="translate(462.68,250.75)"><path d="M3.3 17.5 C5 10 7 5 10.5 5 C14 5 15 9 16.5 14 C18 19 19.5 20 23.4 20" /></g><g transform="translate(488.07,250.75)"><path d="M15.7 5 C12.5 5 12.5 6 12.5 9 C12.5 12 11.5 12.5 9.5 12.7 C11.5 13 12.5 13.5 12.5 16.5 C12.5 19.5 12.5 20.5 15.7 20.5" /></g><g transform="translate(513.46,250.75)"><path d="M11 5 C14.2 5 14.2 6 14.2 9 C14.2 12 15.2 12.5 17 12.7 C15.2 13 14.2 13.5 14.2 16.5 C14.2 19.5 14.2 20.5 11 20.5" /></g><g transform="translate(538.85,250.75)"><path d="M12.70 4.00 L14.99 10.14 L21.54 10.43 L16.41 14.51 L18.17 20.82 L12.70 17.20 L7.23 20.82 L8.99 14.51 L3.86 10.43 L10.41 10.14 Z" /></g><g transform="translate(411.90,304.00)"><path d="M4.5 3.5 L22 21.5" /></g><g transform="translate(437.29,304.00)"><path d="M4.7 3.5 L20.7 20" /><path d="M22.30 21.60 L17.35 20.89 L21.59 16.65 Z" fill="#6a6a6a" stroke="none"/></g><g transform="translate(462.68,304.00)"><path d="M5.6 5 L20.6 20" /><path d="M4.10 3.50 L9.05 4.21 L4.81 8.45 Z" fill="#6a6a6a" stroke="none"/><path d="M22.10 21.50 L17.15 20.79 L21.39 16.55 Z" fill="#6a6a6a" stroke="none"/></g><g transform="translate(488.07,304.00)"><path d="M3.5 3.8 H11.5 V20.3 H22.8" /></g><g transform="translate(513.46,304.00)"><path d="M3.6 3.8 H11.5 V20.3 H21.5" /><path d="M20.00 23.10 L23.50 20.30 L20.00 17.50" fill="none"/></g><g transform="translate(538.85,304.00)"><path d="M5.5 3.8 H11.5 V20.3 H21.5" /><path d="M6.50 1.00 L3.00 3.80 L6.50 6.60" fill="none"/><path d="M20.00 23.10 L23.50 20.30 L20.00 17.50" fill="none"/></g><g transform="translate(564.24,304.00)"><path d="M8 4 C13 4 16 6 13.5 10 C11 14 9 19 18.6 20.3" /></g><g transform="translate(589.63,304.00)"><path d="M6 4 C12 4 15 6 12 10 C9 14 9 20.3 20 20.3" /><path d="M18.10 23.10 L21.60 20.30 L18.10 17.50" fill="none"/></g><g transform="translate(615.02,304.00)"><path d="M6 4 C12 4 15 6 12 10 C9 14 9 20.3 20 20.3" /><path d="M7.90 1.20 L4.40 4.00 L7.90 6.80" fill="none"/><path d="M18.30 23.10 L21.80 20.30 L18.30 17.50" fill="none"/></g><g transform="translate(640.41,304.00)"><path d="M2.6 17 C4 10 6 5 9.5 5 C13 5 14 9 15.5 14 C17 19 19 20.3 23.1 20.3" /></g><g transform="translate(665.80,304.00)"><path d="M4.5 14 L8 8 H19.5 L16.5 11 V14.5 H21.5 V19.3 H4.5 Z" /></g><g transform="translate(691.19,304.00)"><path d="M10.7 3.2 C9.5 6.3 6.5 8.3 7.7 10.3 C9 11.8 14.5 7.3 16.8 9.3 C18.5 11.3 12.5 13.8 13.5 16.8 C14 19.3 18 19.8 18.3 17.6 C18.5 15.8 15.3 15.8 15.3 18.3 C15.3 19.8 16.3 20.8 16.8 21.8" /></g><g transform="translate(411.90,357.25)"><rect x="3.5" y="5.7" width="19.5" height="14.2"/></g><g transform="translate(437.29,357.25)"><rect x="3.5" y="5.7" width="19.5" height="14.2" rx="2.5"/></g><g transform="translate(462.68,357.25)"><path d="M3.5 5.7 H18.5 L23 10.2 V19.9 H3.5 Z" /></g><g transform="translate(488.07,357.25)"><path d="M7.5 5.7 H19 L23 9.7 V19.9 H3.5 V9.7 Z" /></g><g transform="translate(513.46,357.25)"><path d="M3.5 5.7 H18.5 L23 10.2 V19.9 H8 L3.5 15.4 Z" /></g><g transform="translate(538.85,357.25)"><path d="M3.5 5.7 H18.5 L23 10.2 V19.9 H3.5 Z" /></g><g transform="translate(564.24,357.25)"><path d="M3.5 5.7 H19.5 Q23 5.7 23 9.2 V19.9 H3.5 Z" /></g><g transform="translate(589.63,357.25)"><path d="M3.5 8.5 Q3.5 5.7 6.3 5.7 H20.2 Q23 5.7 23 8.5 V19.9 H3.5 Z" /></g><g transform="translate(615.02,357.25)"><path d="M3.5 5.7 H20 Q23 5.7 23 8.7 V19.9 H6.5 Q3.5 19.9 3.5 16.9 Z" /></g><g transform="translate(411.90,410.50)"><rect x="3.7" y="4.5" width="18" height="15.5" /><path d="M6.2 12.8 L9 6.4 L11.8 12.8 M7.2 10.7 H10.8" stroke="#4a7ebb" stroke-width="1.4"/><path d="M13.8 8.2 H20 M13.8 11.8 H20 M6 16.3 H20" stroke="#a0a0a0" stroke-width="1.2"/></g><g transform="translate(437.29,410.50)"><ellipse cx="12.5" cy="12" rx="9.3" ry="7.3"/></g><g transform="translate(462.68,410.50)"><path d="M4.5 21 L12.5 3 L20.5 21 Z" /></g><g transform="translate(488.07,410.50)"><path d="M3.5 3 V21 H21 Z" /></g><g transform="translate(513.46,410.50)"><path d="M7.5 3.5 H22 L17.5 20.5 H3 Z" /></g><g transform="translate(538.85,410.50)"><path d="M7 3.5 H18 L22 20.5 H3 Z" /></g><g transform="translate(564.24,410.50)"><path d="M12.5 3 L22 12 L12.5 21 L3 12 Z" /></g><g transform="translate(589.63,410.50)"><path d="M12.70 3.70 L22.02 10.13 L18.46 20.52 L6.94 20.52 L3.38 10.13 Z" /></g><g transform="translate(615.02,410.50)"><path d="M7.5 3.5 H17.5 L22 12 L17.5 20.5 H7.5 L3 12 Z" /></g><g transform="translate(640.41,410.50)"><path d="M12.70 2.90 L20.13 6.40 L21.96 14.27 L16.82 20.58 L8.58 20.58 L3.44 14.27 L5.27 6.40 Z" /><text x="12.7" y="15.3" font-size="8" font-family="Liberation Sans" text-anchor="middle" fill="#6a6a6a" stroke="none">7</text></g><g transform="translate(665.80,410.50)"><path d="M12.70 2.90 L19.42 5.62 L22.20 12.20 L19.42 18.78 L12.70 21.50 L5.98 18.78 L3.20 12.20 L5.98 5.62 Z" /><text x="12.7" y="15.3" font-size="8" font-family="Liberation Sans" text-anchor="middle" fill="#6a6a6a" stroke="none">8</text></g><g transform="translate(691.19,410.50)"><path d="M12.70 2.90 L18.28 4.68 L21.74 9.33 L21.74 15.07 L18.28 19.72 L12.70 21.50 L7.12 19.72 L3.66 15.07 L3.66 9.33 L7.12 4.68 Z" /><text x="12.7" y="15.3" font-size="8" font-family="Liberation Sans" text-anchor="middle" fill="#6a6a6a" stroke="none">10</text></g><g transform="translate(411.90,435.90)"><path d="M12.70 2.90 L17.45 4.15 L20.93 7.55 L22.20 12.20 L20.93 16.85 L17.45 20.25 L12.70 21.50 L7.95 20.25 L4.47 16.85 L3.20 12.20 L4.47 7.55 L7.95 4.15 Z" /><text x="12.7" y="15.3" font-size="8" font-family="Liberation Sans" text-anchor="middle" fill="#6a6a6a" stroke="none">12</text></g><g transform="translate(437.29,435.90)"><path d="M12.5 12.5 V3.5 A9 9 0 1 1 3.5 12.5 Z" /></g><g transform="translate(462.68,435.90)"><path d="M18.5 19 A9 9 0 1 1 15.5 4 Z" /></g><g transform="translate(488.07,435.90)"><path d="M12.5 3.5 H21.5 V12.5 A9 9 0 1 1 12.5 3.5 Z" /></g><g transform="translate(513.46,435.90)"><rect x="3.5" y="3.5" width="18.5" height="18.5"/><rect x="6" y="6" width="13.5" height="13.5"/></g><g transform="translate(538.85,435.90)"><path d="M3.5 3.5 H21.5 L19 6 H6 V19 L3.5 21.5 Z" /></g><g transform="translate(564.24,435.90)"><path d="M3.5 3.5 H8 V17.5 H21.5 V22 H3.5 Z" /></g><g transform="translate(589.63,435.90)"><path d="M3.5 21 V17 L17 3.5 H21.5 Z" /></g><g transform="translate(615.02,435.90)"><path d="M9 3.5 H16 V9 H21.5 V16 H16 V21.5 H9 V16 H3.5 V9 H9 Z" /></g><g transform="translate(640.41,435.90)"><path d="M7 3.5 H18 A3.5 3.5 0 0 0 21.5 7 V18 A3.5 3.5 0 0 0 18 21.5 H7 A3.5 3.5 0 0 0 3.5 18 V7 A3.5 3.5 0 0 0 7 3.5 Z" /></g><g transform="translate(665.80,435.90)"><ellipse cx="12.5" cy="5.5" rx="6.5" ry="2.5"/><path d="M6 5.5 V19.5 A6.5 2.5 0 0 0 19 19.5 V5.5" /></g><g transform="translate(691.19,435.90)"><path d="M3.5 8 L8 3.5 H21.5 V17 L17 21.5 H3.5 Z M3.5 8 H17 V21.5 M17 8 L21.5 3.5" /></g><g transform="translate(411.90,461.30)"><rect x="3.5" y="3" width="19" height="19" stroke-width="1.6"/><rect x="6.5" y="6" width="13" height="13"/></g><g transform="translate(437.29,461.30)"><circle cx="12.7" cy="12.5" r="9"/><circle cx="12.7" cy="12.5" r="5.8"/></g><g transform="translate(462.68,461.30)"><circle cx="12.7" cy="12.5" r="9"/><circle cx="12.7" cy="12.5" r="6.3"/><path d="M8.5 10 L15 16.5 M10.5 8.5 L17 15" /></g><g transform="translate(488.07,461.30)"><path d="M3.5 17 A9 9 0 0 1 21.5 17 H18.5 A6 6 0 0 0 6.5 17 Z" /></g><g transform="translate(513.46,461.30)"><path d="M3.5 3.5 H21.5 V17 L17 21.5 H3.5 Z M17 21.5 L18 18 L21.5 17" /></g><g transform="translate(538.85,461.30)"><circle cx="12.7" cy="12.5" r="9"/><circle cx="9.5" cy="9.5" r="1"/><circle cx="15.8" cy="9.5" r="1"/><path d="M7.5 14.5 Q12.7 19 18 14.5" /></g><g transform="translate(564.24,461.30)"><path d="M12.5 21 C6 15 3 12 3.5 8 C4 4.5 8 3 10.5 5 L12.5 7 L14.5 5 C17 3 21 4.5 21.5 8 C22 12 19 15 12.5 21 Z" /></g><g transform="translate(589.63,461.30)"><path d="M4.5 5 L10 3.5 L13 9 L12 9.5 L17 14 L16 14.5 L22 21.5 L13 16.5 L14 16 L8 12.5 L9.5 11.5 Z" /></g><g transform="translate(615.02,461.30)"><circle cx="12.7" cy="12.5" r="5"/><path d="M19.70 12.50 L21.90 12.50 M17.65 17.45 L19.21 19.01 M12.70 19.50 L12.70 21.70 M7.75 17.45 L6.19 19.01 M5.70 12.50 L3.50 12.50 M7.75 7.55 L6.19 5.99 M12.70 5.50 L12.70 3.30 M17.65 7.55 L19.21 5.99" stroke-width="1.8"/></g><g transform="translate(640.41,461.30)"><path d="M16 3.5 A9 9 0 1 0 16 21.5 A7 9 0 0 1 16 3.5 Z" /></g><g transform="translate(665.80,461.30)"><path d="M6 8 C5 4.5 9 3 11 5 C12.5 2.5 16.5 3 17 5.5 C20 4.5 22.5 7.5 20.5 10 C23 12 21.5 16 18.5 15.5 C18 18.5 14 19 12.5 17 C10.5 19 6.5 18 6.5 15.5 C3.5 16 2 12.5 4.5 11 C2.5 9.5 3.5 7 6 8 Z" /></g><g transform="translate(691.19,461.30)"><path d="M4 4.5 C13 4.5 21 10 22 20.5" /></g><g transform="translate(411.90,486.70)"><path d="M7 3.5 Q4 3.5 4 6.5 V18.5 Q4 21.5 7 21.5 M18 3.5 Q21 3.5 21 6.5 V18.5 Q21 21.5 18 21.5" /></g><g transform="translate(437.29,486.70)"><path d="M9 3.5 Q6.5 3.5 6.5 6.5 V10 Q6.5 12.5 4 12.5 Q6.5 12.5 6.5 15 V18.5 Q6.5 21.5 9 21.5 M16.5 3.5 Q19 3.5 19 6.5 V10 Q19 12.5 21.5 12.5 Q19 12.5 19 15 V18.5 Q19 21.5 16.5 21.5" /></g><g transform="translate(462.68,486.70)"><path d="M11 3.5 Q8 3.5 8 6.5 V18.5 Q8 21.5 11 21.5" /></g><g transform="translate(488.07,486.70)"><path d="M13 3.5 Q16 3.5 16 6.5 V18.5 Q16 21.5 13 21.5" /></g><g transform="translate(513.46,486.70)"><path d="M15 5 C13 5 12.5 5.5 12.5 8 V11 C12.5 12.2 11.8 12.8 10.5 12.8 C11.8 12.8 12.5 13.5 12.5 14.8 V18 C12.5 20.2 13 20.6 15 20.6" /></g><g transform="translate(538.85,486.70)"><path d="M10.5 5 C12.5 5 13 5.5 13 8 V11 C13 12.2 13.7 12.8 15 12.8 C13.7 12.8 13 13.5 13 14.8 V18 C13 20.2 12.5 20.6 10.5 20.6" /></g><g transform="translate(411.90,539.95)"><path d="M3 8.5 H12.5 V3.5 L21.5 12 L12.5 20.5 V15.5 H3 Z" /></g><g transform="translate(437.29,539.95)"><path d="M22 8.5 H12.5 V3.5 L3.5 12 L12.5 20.5 V15.5 H22 Z" /></g><g transform="translate(462.68,539.95)"><path d="M9 21.5 V12 H4 L12.5 3 L21 12 H16 V21.5 Z" /></g><g transform="translate(488.07,539.95)"><path d="M9 2.5 V12 H4 L12.5 21 L21 12 H16 V2.5 Z" /></g><g transform="translate(513.46,539.95)"><path d="M3 12 L9 5 V9 H16 V5 L22 12 L16 19 V15 H9 V19 Z" /></g><g transform="translate(538.85,539.95)"><path d="M12.5 3 L19.5 9 H15.5 V15 H19.5 L12.5 21.5 L5.5 15 H9.5 V9 H5.5 Z" /></g><g transform="translate(564.24,539.95)"><path d="M12.5 2.5 L16 6 H14 V10.5 H18.5 V8.5 L22 12 L18.5 15.5 V13.5 H14 V18 H16 L12.5 21.5 L9 18 H11 V13.5 H6.5 V15.5 L3 12 L6.5 8.5 V10.5 H11 V6 H9 Z" /></g><g transform="translate(589.63,539.95)"><path d="M12.5 2.5 L16 6 H14 V13.5 H18.5 V11 L22 15.5 L18.5 20 V17.5 H6.5 V20 L3 15.5 L6.5 11 V13.5 H11 V6 H9 Z" /></g><g transform="translate(615.02,539.95)"><path d="M4.5 21 V12 Q4.5 8 8.5 8 H15.5 V4 L21.5 9.5 L15.5 15 V11 H9 Q8 11 8 12 V21 Z" /></g><g transform="translate(640.41,539.95)"><path d="M4 21 V10 Q4 4 10 4 Q16 4 16 10 V12 H19 L14.5 17.5 L10 12 H13 V10 Q13 7 10 7 Q7 7 7 10 V21 Z" /></g><g transform="translate(665.80,539.95)"><path d="M5.5 15 L10.5 10.5 V13.5 H16 V6.5 H13 L17.5 2.5 L22 6.5 H19 V16.5 H10.5 V19.5 Z" /></g><g transform="translate(691.19,539.95)"><path d="M3 15.5 H14 V6.5 H11 L16.5 2.5 L22 6.5 H19 V20 H3 Z" /></g><g transform="translate(411.90,565.35)"><path d="M16 3.5 C10 4 7 8 7.5 12.5 C8 16 10 18.5 13 19 V16.5 L17 20 L13 23 V21 C8.5 21 5 17 5 12 C5 7 9.5 3.5 16 3.5 Z" /></g><g transform="translate(437.29,565.35)"><path d="M9 3.5 C15 4 18 8 17.5 12.5 C17 16 15 18.5 12 19 V16.5 L8 20 L12 23 V21 C16.5 21 20 17 20 12 C20 7 15.5 3.5 9 3.5 Z" /></g><g transform="translate(462.68,565.35)"><path d="M3.5 5 C5 13 10 16 15 13 L14 10 L21.5 9 L19.5 16 L17.5 14.5 C12 19.5 5 17 3.5 5 Z" /></g><g transform="translate(488.07,565.35)"><path d="M3.5 19 C4 11 10 6 16 9 L17 7 L21.5 13 L15 15 L15.5 12 C11 10 7 13 7 19 Z" /></g><g transform="translate(513.46,565.35)"><path d="M9.5 8.5 H13.5 V3.5 L21.5 12 L13.5 20.5 V15.5 H9.5 Z M3.5 8.5 V15.5 M6.5 8.5 V15.5" /></g><g transform="translate(538.85,565.35)"><path d="M3.5 8.5 H13.5 V3.5 L21.5 12 L13.5 20.5 V15.5 H3.5 L6.5 12 Z" /></g><g transform="translate(564.24,565.35)"><path d="M3.5 5.5 H16 L21.5 12 L16 18.5 H3.5 Z" /></g><g transform="translate(589.63,565.35)"><path d="M5 5 H13 L20 12 L13 19 H5 L11 12 Z" /></g><g transform="translate(615.02,565.35)"><path d="M3.5 3.5 H12 V9 H15.5 V6 L21.5 12 L15.5 18 V15 H12 V21.5 H3.5 Z" /></g><g transform="translate(640.41,565.35)"><path d="M3.5 3.5 H21.5 V12 H16 V15 H19 L12.5 21.5 L6 15 H9 V12 H3.5 Z" /></g><g transform="translate(665.80,565.35)"><path d="M21.5 3.5 H13 V9 H9.5 V6 L3.5 12 L9.5 18 V15 H13 V21.5 H21.5 Z" /></g><g transform="translate(691.19,565.35)"><path d="M3.5 21.5 V13 H9 V9.5 H6 L12.5 3.5 L19 9.5 H16 V13 H21.5 V21.5 Z" /></g><g transform="translate(411.90,590.75)"><path d="M9 3.5 H16 V9 H19 V6.5 L22 12 L19 17.5 V15 H16 V21.5 H9 V15 H6 V17.5 L3 12 L6 6.5 V9 H9 Z" /></g><g transform="translate(437.29,590.75)"><path d="M12.5 2.5 L15.5 5 H14 V8 H17 V6.5 L22 12 L17 17.5 V16 H14 V19 H15.5 L12.5 22 L9.5 19 H11 V16 H8 V17.5 L3 12 L8 6.5 V8 H11 V5 H9.5 Z" /></g><g transform="translate(462.68,590.75)"><path d="M4 20 V12 A8 8 0 0 1 20 12 H22.5 L17.5 18 L12.5 12 H15 A3 3 0 0 0 9 12 V20 Z" /></g><g transform="translate(411.90,644.00)"><path d="M9.5 3.5 H15.5 V9.5 H21.5 V15.5 H15.5 V21.5 H9.5 V15.5 H3.5 V9.5 H9.5 Z" /></g><g transform="translate(437.29,644.00)"><rect x="3.5" y="10" width="18" height="5"/></g><g transform="translate(462.68,644.00)"><path d="M6.5 3.5 L12.5 9.5 L18.5 3.5 L21.5 6.5 L15.5 12.5 L21.5 18.5 L18.5 21.5 L12.5 15.5 L6.5 21.5 L3.5 18.5 L9.5 12.5 L3.5 6.5 Z" /></g><g transform="translate(488.07,644.00)"><rect x="3.5" y="11" width="18" height="3"/><circle cx="12.5" cy="6" r="1.4"/><circle cx="12.5" cy="19" r="1.4"/></g><g transform="translate(513.46,644.00)"><rect x="3.5" y="6.5" width="18" height="4.5"/><rect x="3.5" y="14" width="18" height="4.5"/></g><g transform="translate(538.85,644.00)"><rect x="3.5" y="6.5" width="18" height="4.5"/><rect x="3.5" y="14" width="18" height="4.5"/><path d="M4.5 21.5 L20 2.5 M7 21.5 L21.5 4" /></g><g transform="translate(411.90,697.25)"><rect x="3.5" y="5" width="20" height="14"/></g><g transform="translate(437.29,697.25)"><rect x="3.5" y="5" width="20" height="14" rx="5"/></g><g transform="translate(462.68,697.25)"><path d="M3 12 L12.5 7.5 L22 12 L12.5 16.5 Z" /></g><g transform="translate(488.07,697.25)"><path d="M7.5 5 H21.5 L17.5 19 H3.5 Z" /></g><g transform="translate(513.46,697.25)"><rect x="3.5" y="5" width="19" height="15"/><path d="M6.3 5 V20 M19.7 5 V20" /></g><g transform="translate(538.85,697.25)"><rect x="4.5" y="5" width="16.5" height="15"/><path d="M4.5 7.5 H21 M7 5 V20" /></g><g transform="translate(564.24,697.25)"><path d="M3.5 4 H21.5 V16.5 C16 14.5 11 21.5 3.5 18.5 Z" /></g><g transform="translate(589.63,697.25)"><path d="M7.5 3.5 H21.5 V13 H19.5 M5.5 6 H19.5 V15.5 H17.5 M3.5 8.5 H17.5 V18 C13 16.5 9 21.5 3.5 19.5 Z" /></g><g transform="translate(615.02,697.25)"><rect x="3.5" y="8.5" width="19" height="8" rx="4"/></g><g transform="translate(640.41,697.25)"><path d="M7.5 5 H17.5 L22 12.5 L17.5 19.5 H7.5 L3 12.5 Z" /></g><g transform="translate(665.80,697.25)"><path d="M3.5 10 L21.5 5 V19.5 H3.5 Z" /></g><g transform="translate(691.19,697.25)"><path d="M3 4.5 H22 L18 19.5 H7 Z" /></g><g transform="translate(411.90,722.65)"><circle cx="12.5" cy="12.5" r="6.3"/></g><g transform="translate(437.29,722.65)"><path d="M5.5 5 H19.5 V14.5 L12.5 19.5 L5.5 14.5 Z" /></g><g transform="translate(462.68,722.65)"><path d="M8 5 H22 V19.5 H3.5 V9.5 Z" /></g><g transform="translate(488.07,722.65)"><path d="M3.5 5.5 C8.5 3 14 9 21.5 5.5 V19 C16.5 21.5 11 15.5 3.5 19 Z" /></g><g transform="translate(513.46,722.65)"><circle cx="12.5" cy="12.5" r="9"/><path d="M6.2 6.2 L18.8 18.8 M18.8 6.2 L6.2 18.8" /></g><g transform="translate(538.85,722.65)"><circle cx="12.5" cy="12.5" r="9"/><path d="M3.5 12.5 H21.5 M12.5 3.5 V21.5" /></g><g transform="translate(564.24,722.65)"><path d="M5 3.5 H20 L5 21.5 H20 Z" /></g><g transform="translate(589.63,722.65)"><path d="M12.5 3 L17.5 12.5 L12.5 22 L7.5 12.5 Z M7.5 12.5 H17.5" /></g><g transform="translate(615.02,722.65)"><path d="M12.5 3.5 L21 20.5 H4 Z" /></g><g transform="translate(640.41,722.65)"><path d="M4 4.5 H21 L12.5 21.5 Z" /></g><g transform="translate(665.80,722.65)"><path d="M7.5 4.5 H21.5 C19 7 19 17 21.5 19.5 H7.5 C3.5 19.5 3.5 4.5 7.5 4.5 Z" /></g><g transform="translate(691.19,722.65)"><path d="M3.5 4.5 H12.5 C23.5 4.5 23.5 21 12.5 21 H3.5 Z" /></g><g transform="translate(411.90,748.05)"><path d="M12.5 21 A9 9 0 1 1 21.5 12 V21 Z" /></g><g transform="translate(437.29,748.05)"><ellipse cx="12.5" cy="7" rx="9" ry="3.5"/><path d="M3.5 7 V17 A9 3.5 0 0 0 21.5 17 V7" /></g><g transform="translate(462.68,748.05)"><path d="M7 3.5 H18 C20.5 3.5 20.5 21.5 18 21.5 H7 C4 21.5 4 3.5 7 3.5 Z M18 3.5 C15.5 3.5 15.5 21.5 18 21.5" /></g><g transform="translate(488.07,748.05)"><path d="M8 3.5 H16 C23 3.5 23 21.5 16 21.5 H8 L3.5 12.5 Z" /></g><g transform="translate(411.90,801.30)"><path d="M3 5 L9 8.5 L11 3 L13 7.5 L18 3.5 L17 8.5 L22 9.5 L18.5 13 L22 18.5 L16 17 L15 22 L11.5 18 L8 21.5 L8 17 L3 16.5 L6.5 12 Z" /></g><g transform="translate(437.29,801.30)"><path d="M12.70 3.00 L14.33 6.41 L17.45 4.27 L17.15 8.05 L20.93 7.75 L18.79 10.87 L22.20 12.50 L18.79 14.13 L20.93 17.25 L17.15 16.95 L17.45 20.73 L14.33 18.59 L12.70 22.00 L11.07 18.59 L7.95 20.73 L8.25 16.95 L4.47 17.25 L6.61 14.13 L3.20 12.50 L6.61 10.87 L4.47 7.75 L8.25 8.05 L7.95 4.27 L11.07 6.41 Z" /></g><g transform="translate(462.68,801.30)"><path d="M12.70 3.00 L14.82 10.38 L22.20 12.50 L14.82 14.62 L12.70 22.00 L10.58 14.62 L3.20 12.50 L10.58 10.38 Z" /></g><g transform="translate(488.07,801.30)"><path d="M12.70 3.50 L15.05 9.76 L21.74 10.06 L16.50 14.24 L18.28 20.69 L12.70 17.00 L7.12 20.69 L8.90 14.24 L3.66 10.06 L10.35 9.76 Z" /></g><g transform="translate(513.46,801.30)"><path d="M12.70 3.00 L15.70 7.30 L20.93 7.75 L18.70 12.50 L20.93 17.25 L15.70 17.70 L12.70 22.00 L9.70 17.70 L4.47 17.25 L6.70 12.50 L4.47 7.75 L9.70 7.30 Z" /></g><g transform="translate(538.85,801.30)"><path d="M12.70 3.00 L15.65 6.37 L20.13 6.58 L19.33 10.99 L21.96 14.61 L18.02 16.74 L16.82 21.06 L12.70 19.30 L8.58 21.06 L7.38 16.74 L3.44 14.61 L6.07 10.99 L5.27 6.58 L9.75 6.37 Z" /></g><g transform="translate(564.24,801.30)"><path d="M12.70 3.20 L15.49 5.76 L19.28 5.92 L19.44 9.71 L22.00 12.50 L19.44 15.29 L19.28 19.08 L15.49 19.24 L12.70 21.80 L9.91 19.24 L6.12 19.08 L5.96 15.29 L3.40 12.50 L5.96 9.71 L6.12 5.92 L9.91 5.76 Z" /><text x="12.7" y="15" font-size="7" font-family="Liberation Sans" text-anchor="middle" fill="#6a6a6a" stroke="none">8</text></g><g transform="translate(589.63,801.30)"><path d="M12.70 3.20 L15.02 5.37 L18.17 4.98 L18.77 8.09 L21.54 9.63 L20.20 12.50 L21.54 15.37 L18.77 16.91 L18.17 20.02 L15.02 19.63 L12.70 21.80 L10.38 19.63 L7.23 20.02 L6.63 16.91 L3.86 15.37 L5.20 12.50 L3.86 9.63 L6.63 8.09 L7.23 4.98 L10.38 5.37 Z" /><text x="12.7" y="15" font-size="7" font-family="Liberation Sans" text-anchor="middle" fill="#6a6a6a" stroke="none">10</text></g><g transform="translate(615.02,801.30)"><path d="M12.70 3.20 L14.67 5.16 L17.35 4.45 L18.07 7.13 L20.75 7.85 L20.04 10.53 L22.00 12.50 L20.04 14.47 L20.75 17.15 L18.07 17.87 L17.35 20.55 L14.67 19.84 L12.70 21.80 L10.73 19.84 L8.05 20.55 L7.33 17.87 L4.65 17.15 L5.36 14.47 L3.40 12.50 L5.36 10.53 L4.65 7.85 L7.33 7.13 L8.05 4.45 L10.73 5.16 Z" /><text x="12.7" y="15" font-size="7" font-family="Liberation Sans" text-anchor="middle" fill="#6a6a6a" stroke="none">12</text></g><g transform="translate(640.41,801.30)"><path d="M12.70 3.20 L14.22 4.85 L16.26 3.91 L17.03 6.01 L19.28 5.92 L19.19 8.17 L21.29 8.94 L20.35 10.98 L22.00 12.50 L20.35 14.02 L21.29 16.06 L19.19 16.83 L19.28 19.08 L17.03 18.99 L16.26 21.09 L14.22 20.15 L12.70 21.80 L11.18 20.15 L9.14 21.09 L8.37 18.99 L6.12 19.08 L6.21 16.83 L4.11 16.06 L5.05 14.02 L3.40 12.50 L5.05 10.98 L4.11 8.94 L6.21 8.17 L6.12 5.92 L8.37 6.01 L9.14 3.91 L11.18 4.85 Z" /><text x="12.7" y="15" font-size="7" font-family="Liberation Sans" text-anchor="middle" fill="#6a6a6a" stroke="none">16</text></g><g transform="translate(665.80,801.30)"><path d="M12.70 3.20 L13.73 4.67 L15.11 3.52 L15.72 5.20 L17.35 4.45 L17.51 6.23 L19.28 5.92 L18.97 7.69 L20.75 7.85 L20.00 9.48 L21.68 10.09 L20.53 11.47 L22.00 12.50 L20.53 13.53 L21.68 14.91 L20.00 15.52 L20.75 17.15 L18.97 17.31 L19.28 19.08 L17.51 18.77 L17.35 20.55 L15.72 19.80 L15.11 21.48 L13.73 20.33 L12.70 21.80 L11.67 20.33 L10.29 21.48 L9.68 19.80 L8.05 20.55 L7.89 18.77 L6.12 19.08 L6.43 17.31 L4.65 17.15 L5.40 15.52 L3.72 14.91 L4.87 13.53 L3.40 12.50 L4.87 11.47 L3.72 10.09 L5.40 9.48 L4.65 7.85 L6.43 7.69 L6.12 5.92 L7.89 6.23 L8.05 4.45 L9.68 5.20 L10.29 3.52 L11.67 4.67 Z" /><text x="12.7" y="15" font-size="7" font-family="Liberation Sans" text-anchor="middle" fill="#6a6a6a" stroke="none">24</text></g><g transform="translate(691.19,801.30)"><path d="M12.70 3.20 L13.48 4.54 L14.51 3.38 L15.02 4.84 L16.26 3.91 L16.47 5.44 L17.87 4.77 L17.78 6.32 L19.28 5.92 L18.88 7.42 L20.43 7.33 L19.76 8.73 L21.29 8.94 L20.36 10.18 L21.82 10.69 L20.66 11.72 L22.00 12.50 L20.66 13.28 L21.82 14.31 L20.36 14.82 L21.29 16.06 L19.76 16.27 L20.43 17.67 L18.88 17.58 L19.28 19.08 L17.78 18.68 L17.87 20.23 L16.47 19.56 L16.26 21.09 L15.02 20.16 L14.51 21.62 L13.48 20.46 L12.70 21.80 L11.92 20.46 L10.89 21.62 L10.38 20.16 L9.14 21.09 L8.93 19.56 L7.53 20.23 L7.62 18.68 L6.12 19.08 L6.52 17.58 L4.97 17.67 L5.64 16.27 L4.11 16.06 L5.04 14.82 L3.58 14.31 L4.74 13.28 L3.40 12.50 L4.74 11.72 L3.58 10.69 L5.04 10.18 L4.11 8.94 L5.64 8.73 L4.97 7.33 L6.52 7.42 L6.12 5.92 L7.62 6.32 L7.53 4.77 L8.93 5.44 L9.14 3.91 L10.38 4.84 L10.89 3.38 L11.92 4.54 Z" /><text x="12.7" y="15" font-size="7" font-family="Liberation Sans" text-anchor="middle" fill="#6a6a6a" stroke="none">32</text></g><g transform="translate(411.90,826.70)"><path d="M3.5 10 H7.5 V6.5 H17.5 V10 H21.5 L19.5 13.5 L21.5 17.5 H15.5 V15 H9.5 V17.5 H3.5 L5.5 13.5 Z M7.5 10 V15 H9.5 M17.5 10 V15 H15.5" /></g><g transform="translate(437.29,826.70)"><path d="M3.5 6.5 H9.5 V9 H15.5 V6.5 H21.5 L19.5 10.5 L21.5 14 H17.5 V17.5 H7.5 V14 H3.5 L5.5 10.5 Z M7.5 9 V14 M17.5 9 V14" /></g><g transform="translate(462.68,826.70)"><path d="M3.5 10 H8 C8 6 17 6 17 10 H21.5 L19.5 14 L21.5 18 H15.5 V15 C14 13 11 13 9.5 15 V18 H3.5 L5.5 14 Z" /></g><g transform="translate(488.07,826.70)"><path d="M3.5 6.5 H9.5 V9.5 C11 11.5 14 11.5 15.5 9.5 V6.5 H21.5 L19.5 10.5 L21.5 14.5 H17 C17 18.5 8 18.5 8 14.5 H3.5 L5.5 10.5 Z" /></g><g transform="translate(513.46,826.70)"><path d="M7 6 H19 Q21 6 21 4.5 Q21 3 19 3 H9 Q7 3 7 5 V20 Q7 21.5 5.5 21.5 Q4 21.5 4 20 V19 H17 V6" /></g><g transform="translate(538.85,826.70)"><path d="M6 7 H20 V18 H6 V21.5 Q3.5 21.5 3.5 20 V9 Q3.5 7 6 7 M20 7 V5 Q20 3.5 21.5 3.5 Q22.5 3.5 22.5 5 V16 Q22.5 18 20 18" /></g><g transform="translate(564.24,826.70)"><path d="M3.5 6 C8 2.5 11 8.5 21.5 5 V18.5 C17 22 13 15.5 3.5 19 Z" /></g><g transform="translate(589.63,826.70)"><path d="M3.5 6.5 C6.5 4 9.5 4 12.5 6.5 C15.5 9 18.5 9 21.5 6.5 V18.5 C18.5 21 15.5 21 12.5 18.5 C9.5 16 6.5 16 3.5 18.5 Z" /></g><g transform="translate(411.90,879.95)"><path d="M3.5 3.5 H22 V15.5 H12 L7 21.5 V15.5 H3.5 Z" /></g><g transform="translate(437.29,879.95)"><path d="M6 3.5 H19.5 Q22 3.5 22 6 V13 Q22 15.5 19.5 15.5 H12 L8 21 L8.5 15.5 H6 Q3.5 15.5 3.5 13 V6 Q3.5 3.5 6 3.5 Z" /></g><g transform="translate(462.68,879.95)"><path d="M9 18.5 C4 17 3.5 13.5 3.5 11 C3.5 6 7.5 3.5 12.5 3.5 C17.5 3.5 21.5 6 21.5 10.5 C21.5 15 17 17.5 11 17 L7 21 Z" /></g><g transform="translate(488.07,879.95)"><path d="M6 6.5 C5 3.5 9 2.5 10.5 4.5 C12 2 16 2.5 16.5 5 C19.5 4 22 7 20 9.5 C22.5 11.5 21 15 18 14.5 C17.5 17 13.5 17.5 12 15.5 C10 17.5 6.5 16.5 6.5 14 C3.5 14.5 2.5 11 4.5 10 C2.5 8.5 3.5 6 6 6.5 Z" /><circle cx="6" cy="18.5" r="1"/><circle cx="4.5" cy="21.5" r="0.6"/></g><g transform="translate(513.46,879.95)"><rect x="10" y="6" width="12" height="9.5"/><path d="M3 20.5 L8.5 13" /></g><g transform="translate(538.85,879.95)"><rect x="10" y="6" width="12" height="9.5"/><path d="M3 19.5 L5 14 H8.5" /></g><g transform="translate(564.24,879.95)"><rect x="10" y="6" width="12" height="9.5"/><path d="M8.5 14 H5.5 V19.5 L9 21.5" /></g><g transform="translate(589.63,879.95)"><rect x="10" y="6" width="12" height="9.5" stroke-dasharray="1.2 1.2"/><path d="M3 20.5 L8.5 8 V15.5" /></g><g transform="translate(615.02,879.95)"><rect x="10" y="6" width="12" height="9.5" stroke-dasharray="1.2 1.2"/><path d="M3 19.5 L5 14 H8.5 M8.5 8 V15.5" /></g><g transform="translate(640.41,879.95)"><rect x="10" y="6" width="12" height="9.5" stroke-dasharray="1.2 1.2"/><path d="M8.5 14 H5.5 V19.5 L9 21.5 M8.5 8 V15.5" /></g><g transform="translate(665.80,879.95)"><rect x="10" y="6" width="12" height="9.5" stroke-dasharray="1.2 1.2"/><path d="M3 20.5 L8.5 14" /></g><g transform="translate(691.19,879.95)"><rect x="10" y="6" width="12" height="9.5" stroke-dasharray="1.2 1.2"/><path d="M3 19.5 L4.5 14 H8.5" /></g><g transform="translate(411.90,905.35)"><rect x="7" y="5" width="12" height="9.5" stroke-dasharray="1.2 1.2"/><path d="M6 13 H2.5 V18.5 L6 20.5" /></g><g transform="translate(437.29,905.35)"><rect x="12" y="5" width="10" height="10"/><path d="M3 20.5 L8.5 13 M9.8 5 V15" /></g><g transform="translate(462.68,905.35)"><rect x="12" y="5" width="10" height="10"/><path d="M3 19.5 L5 14 H8.5 M9.8 5 V15" /></g><g transform="translate(488.07,905.35)"><rect x="12" y="5" width="10" height="10"/><path d="M8.5 14 H5.5 V19.5 L9 21.5 M9.8 5 V15" /></g><g transform="translate(411.90,958.60)"><rect x="3" y="3" width="19.5" height="19.5"/><path d="M17.5 7 V18.5 L7.5 12.7 Z" /></g><g transform="translate(437.29,958.60)"><rect x="3" y="3" width="19.5" height="19.5"/><path d="M8 7 V18.5 L18 12.7 Z" /></g><g transform="translate(462.68,958.60)"><rect x="3" y="3" width="19.5" height="19.5"/><path d="M17.5 7 V18.5 L9 12.7 Z M7 7 V18.5" /></g><g transform="translate(488.07,958.60)"><rect x="3" y="3" width="19.5" height="19.5"/><path d="M8 7 V18.5 L16.5 12.7 Z M18.5 7 V18.5" /></g><g transform="translate(513.46,958.60)"><rect x="3" y="3" width="19.5" height="19.5"/><path d="M6.5 12.5 L12.7 6.5 L19 12.5 M8 11 V18.5 H17.5 V11 M11 18.5 V15 H14.5 V18.5 M16 8 V6.5 H17.5 V10" /></g><g transform="translate(538.85,958.60)"><rect x="3" y="3" width="19.5" height="19.5"/><circle cx="12.7" cy="12.7" r="6"/><circle cx="12.7" cy="9.7" r="0.8" fill="#6a6a6a"/><path d="M11.5 12 H13 V16 M11 16 H14.5" /></g><g transform="translate(564.24,958.60)"><rect x="3" y="3" width="19.5" height="19.5"/><path d="M7.5 10 V16 Q7.5 18 10 18 H14 Q16.5 18 16.5 15.5 V12 M14 9.5 L16.5 7 L19 9.5" /></g><g transform="translate(589.63,958.60)"><rect x="3" y="3" width="19.5" height="19.5"/><path d="M6.5 9.5 H16 V16 H6.5 Z M16 11 L19 9.5 V16 L16 14.5 M7 8 H12" /></g><g transform="translate(615.02,958.60)"><rect x="3" y="3" width="19.5" height="19.5"/><path d="M8 6.5 H14.5 L17.5 9.5 V19 H8 Z M14.5 6.5 V9.5 H17.5" /></g><g transform="translate(640.41,958.60)"><rect x="3" y="3" width="19.5" height="19.5"/><path d="M6 10.5 H9 L13 7 V18.5 L9 15 H6 Z M15.5 9.5 L17.5 8 M15.5 12.7 H18.5 M15.5 16 L17.5 17.5" /></g><g transform="translate(665.80,958.60)"><rect x="3" y="3" width="19.5" height="19.5"/><text x="12.7" y="19" font-size="15" font-weight="bold" font-family="Liberation Sans" text-anchor="middle" fill="#6a6a6a" stroke="none">?</text></g><g transform="translate(691.19,958.60)"><rect x="3" y="3" width="19.5" height="19.5"/></g></g></svg>
<svg style="left:0px;top:0px" width="2474" height="1360" viewBox="0 0 2474 1360"><defs><filter id="sh" x="-20%" y="-20%" width="140%" height="140%"><feGaussianBlur in="SourceAlpha" stdDeviation="9"/><feOffset dx="3" dy="-3"/><feComponentTransfer><feFuncA type="linear" slope="0.2"/></feComponentTransfer><feMerge><feMergeNode/><feMergeNode in="SourceGraphic"/></feMerge></filter></defs>
<path d="M4 1199.3 L313 1224.8 C338 1227 358 1239 369.5 1260 L402 1357 L13 1357 Q4 1357 4 1348 Z" fill="#fff" filter="url(#sh)"/></svg>
<div class="t" style="left:130.0px;top:1266.6px;font-size:55px;line-height:55px;color:#14214d;font-weight:bold;letter-spacing:-1.3px">Scribbr</div>
<svg style="left:0px;top:0px" width="400" height="1360" viewBox="0 0 400 1360"><g fill="none" stroke="#fa561d" stroke-width="4" stroke-linecap="round" stroke-linejoin="round">
<path d="M112.5 1290.5 L118.5 1287 Q121 1285.3 118.5 1283.6 L89.5 1267.5 Q87 1266.2 84.5 1267.5 L55.5 1283.6 Q53 1285.3 55.5 1287 L84.5 1303.3 Q87 1304.6 89.5 1303.3 L99 1298"/>
<path d="M67.2 1293 V1306 Q67.2 1308.5 69.5 1309.8 L84.5 1318 Q87 1319.3 89.5 1318 L103.3 1310 Q105.5 1308.7 105.5 1306 V1299.5 Q105.5 1295.5 101.5 1293.3 L87 1284.5"/>
</g>
<path d="M79.8 1278.3 L95.5 1281.8 L85.3 1289 Z" fill="#fa561d" stroke="#fa561d" stroke-width="2" stroke-linejoin="round"/></svg>
</body></html>
